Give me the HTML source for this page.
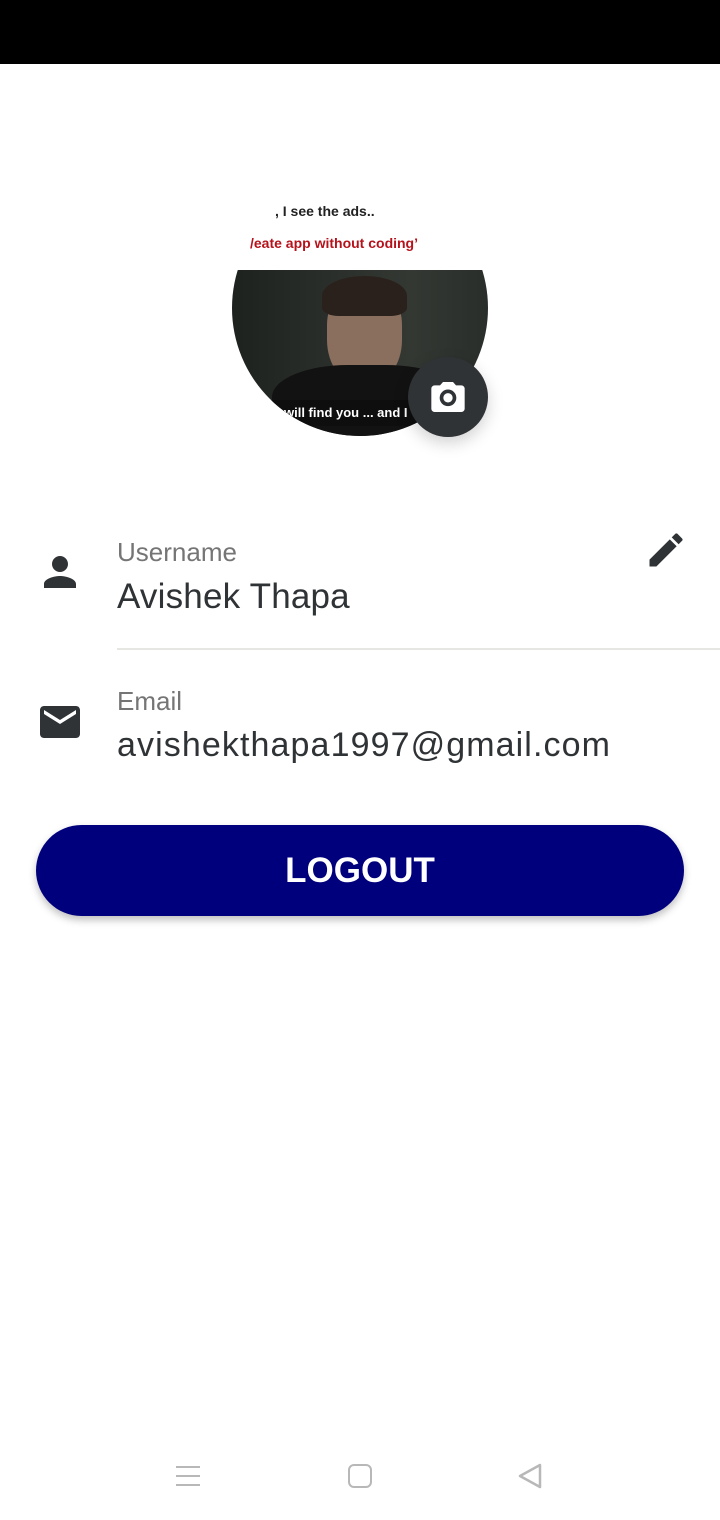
<!DOCTYPE html>
<html><head><meta charset="utf-8"><style>
*{margin:0;padding:0;box-sizing:border-box}
body{width:720px;height:1520px;background:#fff;position:relative;overflow:hidden;font-family:"Liberation Sans",sans-serif}
.abs{position:absolute}
</style></head><body>
<div class="abs" style="left:0;top:0;width:720px;height:64px;background:#000"></div>

<div class="abs" style="left:232px;top:180px;width:256px;height:256px;border-radius:50%;overflow:hidden">
  <div class="abs" style="left:0;top:0;width:256px;height:90px;background:#fff"></div>
  <div class="abs" style="left:0;top:90px;width:256px;height:166px;background:linear-gradient(90deg,#1e221f,#2b2f2b 40%,#343833 70%,#2a2e2b)"></div>
  <div class="abs" style="left:95px;top:105px;width:75px;height:100px;border-radius:40% 40% 45% 45%;background:#8a6e5e"></div>
  <div class="abs" style="left:90px;top:96px;width:85px;height:40px;border-radius:50% 50% 20% 20%;background:#2a211c"></div>
  <div class="abs" style="left:40px;top:185px;width:190px;height:80px;border-radius:40% 40% 0 0;background:#121212"></div>
  <div class="abs" style="left:0;top:220px;width:256px;height:26px;background:#0e0e0e"></div>
  <div class="abs" style="left:52px;top:225px;color:#fff;font-size:13px;font-weight:bold">will find you ... and I</div>
</div>
<div class="abs" style="left:275px;top:203px;color:#222;font-size:14px;font-weight:bold">, I see the ads..</div>
<div class="abs" style="left:250px;top:235px;color:#b5121b;font-size:14px;font-weight:bold">/eate app without coding’</div>

<div class="abs" style="left:408px;top:357px;width:80px;height:80px;border-radius:50%;background:#2f3336;box-shadow:0 6px 16px rgba(0,0,0,.18)">
  <svg class="abs" style="left:20px;top:20px" width="40" height="40" viewBox="0 0 24 24"><path fill="#fff" d="M9 3L7.2 5H4c-1.1 0-2 .9-2 2v12c0 1.1.9 2 2 2h16c1.1 0 2-.9 2-2V7c0-1.1-.9-2-2-2h-3.2L15 3H9zm3 4.5a5 5 0 1 1 0 10 5 5 0 0 1 0-10zm0 2.2a2.8 2.8 0 1 0 0 5.6 2.8 2.8 0 0 0 0-5.6z" fill-rule="evenodd"/></svg>
</div>

<svg class="abs" style="left:36px;top:548px" width="48" height="48" viewBox="0 0 24 24"><path fill="#2f3336" d="M12 12c2.2 0 4-1.8 4-4s-1.8-4-4-4-4 1.8-4 4 1.8 4 4 4zm0 2c-2.7 0-8 1.3-8 4v2h16v-2c0-2.7-5.3-4-8-4z"/></svg>
<div class="abs" style="left:117px;top:537px;color:#757575;font-size:26px">Username</div>
<div class="abs" style="left:117px;top:577px;color:#2f3336;font-size:35px;letter-spacing:0.2px">Avishek Thapa</div>
<svg class="abs" style="left:644px;top:528px" width="44" height="44" viewBox="0 0 24 24"><path fill="#2f3336" d="M3 17.25V21h3.75L17.81 9.94l-3.75-3.75L3 17.25zM20.71 7.04a1 1 0 0 0 0-1.41l-2.34-2.34a1 1 0 0 0-1.41 0l-1.83 1.83 3.75 3.75 1.83-1.83z"/></svg>
<div class="abs" style="left:117px;top:648px;width:603px;height:2px;background:#e6e6e3"></div>

<svg class="abs" style="left:36px;top:698px" width="48" height="48" viewBox="0 0 24 24"><path fill="#2f3336" d="M20 4H4c-1.1 0-2 .9-2 2v12c0 1.1.9 2 2 2h16c1.1 0 2-.9 2-2V6c0-1.1-.9-2-2-2zm0 4l-8 5-8-5V6l8 5 8-5v2z"/></svg>
<div class="abs" style="left:117px;top:686px;color:#757575;font-size:26px">Email</div>
<div class="abs" style="left:117px;top:726px;color:#2f3336;font-size:34px;letter-spacing:1.1px">avishekthapa1997@gmail.com</div>

<div class="abs" style="left:36px;top:825px;width:648px;height:91px;border-radius:46px;background:#00007c;box-shadow:0 4px 8px rgba(0,0,0,.25);color:#fff;font-size:35px;font-weight:bold;text-align:center;line-height:91px">LOGOUT</div>

<svg class="abs" style="left:174px;top:1462px" width="28" height="28" viewBox="0 0 28 28"><path stroke="#b8b8b8" stroke-width="2" d="M2 5h24M2 14h24M2 23h24"/></svg>
<div class="abs" style="left:348px;top:1464px;width:24px;height:24px;border:2.5px solid #b8b8b8;border-radius:6px"></div>
<svg class="abs" style="left:516px;top:1461px" width="30" height="30" viewBox="0 0 30 30"><path fill="none" stroke="#b8b8b8" stroke-width="2.5" stroke-linejoin="round" d="M24 4v22L4 15z"/></svg>
</body></html>
